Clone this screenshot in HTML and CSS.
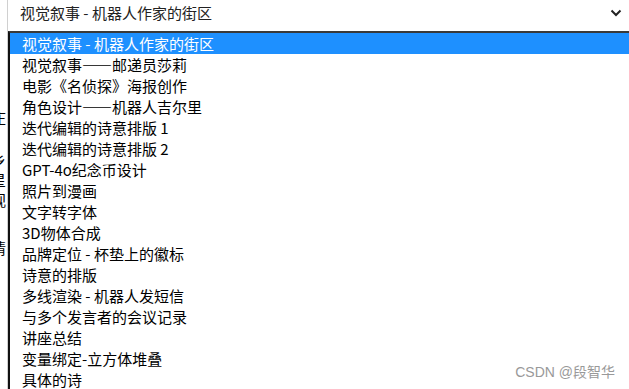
FILE: index.html
```html
<!DOCTYPE html>
<html lang="zh-CN">
<head>
    <meta charset="UTF-8">
    <title>视觉叙事</title>
    <link rel="stylesheet" href="styles.css">
</head>
<body>
    <div class="page">
        <div class="side">
            <div class="side-top"></div>
            <div class="side-text">
                <p class="t1">庄</p>
                <p class="t2">乡</p>
                <p class="t3">星</p>
                <p class="t4">视</p>
                <p class="t5">情</p>
            </div>
        </div>
        <div class="select-wrap">
            <div class="select">
                <span class="select-value">视觉叙事 - 机器人作家的街区</span>
                <svg class="chevron" width="12" height="8" viewBox="0 0 12 8">
                    <path d="M1.5 1.5 L6 6 L10.5 1.5" fill="none" stroke="#222" stroke-width="2"/>
                </svg>
            </div>
            <ul class="options">
                <li class="option selected">视觉叙事 - 机器人作家的街区</li>
                <li class="option">视觉叙事——邮递员莎莉</li>
                <li class="option">电影《名侦探》海报创作</li>
                <li class="option">角色设计——机器人吉尔里</li>
                <li class="option">迭代编辑的诗意排版 1</li>
                <li class="option">迭代编辑的诗意排版 2</li>
                <li class="option">GPT-4o纪念币设计</li>
                <li class="option">照片到漫画</li>
                <li class="option">文字转字体</li>
                <li class="option">3D物体合成</li>
                <li class="option">品牌定位 - 杯垫上的徽标</li>
                <li class="option">诗意的排版</li>
                <li class="option">多线渲染 - 机器人发短信</li>
                <li class="option">与多个发言者的会议记录</li>
                <li class="option">讲座总结</li>
                <li class="option">变量绑定-立方体堆叠</li>
                <li class="option">具体的诗</li>
                <li class="option">图像生成</li>
            </ul>
        </div>
        <div class="watermark">CSDN @段智华</div>
    </div>
</body>
</html>
```
FILE: styles.css
```css
html, body {
    margin: 0;
    padding: 0;
    height: 100%;
    overflow: hidden;
    background: #fff;
}
body {
    font-family: "Liberation Sans", "Noto Sans CJK SC", sans-serif;
    font-size: 14px;
    color: #000;
}
.page {
    position: relative;
    display: flex;
    height: 389px;
    overflow: hidden;
}
.side {
    width: 7px;
    flex-shrink: 0;
    overflow: hidden;
    border-right: 1px solid #d0d0d0;
}
.side-top {
    height: 40px;
    background: #fff;
}
.side-text {
    position: relative;
    margin-left: -9px;
    font-family: "Noto Sans CJK SC", sans-serif;
    font-size: 15px;
    line-height: 20px;
}
.side-text p {
    margin: 0;
}
.side-text .t1 { margin-top: 68px; }
.side-text .t2 { margin-top: 22px; }
.side-text .t3 { margin-top: 0; }
.side-text .t4 { margin-top: 0; }
.side-text .t5 { margin-top: 28px; }
.select-wrap {
    position: relative;
    flex: 1;
}
.select {
    display: flex;
    align-items: center;
    justify-content: space-between;
    height: 31px;
    padding: 0 7px 0 12px;
    background: #fff;
    color: #222;
    font-family: "Noto Sans CJK SC", sans-serif;
    font-size: 15px;
}
.select-value {
    margin-top: -6px;
}
.chevron {
    margin-top: -6px;
}
.options {
    position: absolute;
    top: 31px;
    left: 0;
    width: 640px;
    margin: 0;
    padding: 0;
    list-style: none;
    background: #fff;
    border-top: 2px solid #3a3a3a;
    border-left: 2px solid #111;
}
.option {
    height: 21px;
    line-height: 21px;
    padding-left: 12px;
    font-family: "Noto Sans CJK SC", sans-serif;
    font-size: 15px;
    color: #000;
    white-space: nowrap;
}
.option.selected {
    background: #1e90ff;
    color: #fff;
}
.watermark {
    position: absolute;
    right: 14px;
    bottom: 8px;
    font-family: "Liberation Sans", "Noto Sans CJK SC", sans-serif;
    font-size: 14px;
    color: #999;
}
```
